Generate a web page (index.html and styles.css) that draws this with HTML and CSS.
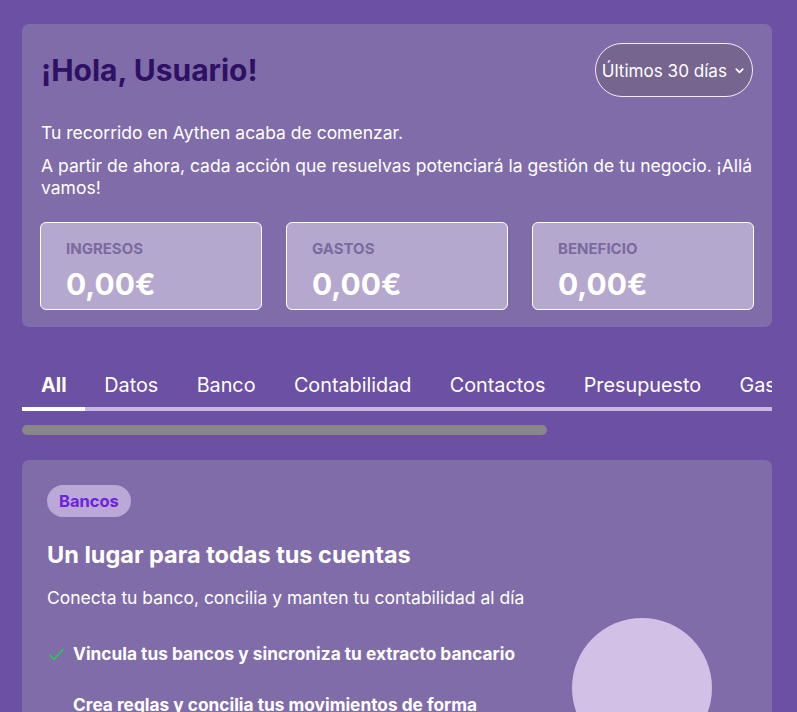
FILE: index.html
```html
<!DOCTYPE html>
<html lang="es">
<head>
<meta charset="utf-8">
<title>Aythen</title>
<link rel="stylesheet" href="styles.css">
</head>
<body>
<main class="page">
  <section class="card welcome">
    <div class="welcome-head">
      <h1 class="title">¡Hola, Usuario!</h1>
      <button class="range">Últimos 30 días
        <svg class="chev" width="11" height="11" viewBox="0 0 12 12"><path d="M2.5 4.5 6 8l3.5-3.5" fill="none" stroke="#fff" stroke-width="1.9" stroke-linecap="round" stroke-linejoin="round"/></svg>
      </button>
    </div>
    <p class="intro first">Tu recorrido en Aythen acaba de comenzar.</p>
    <p class="intro">A partir de ahora, cada acción que resuelvas potenciará la gestión de tu negocio. ¡Allá vamos!</p>
    <div class="stats">
      <div class="stat"><div class="stat-label">INGRESOS</div><div class="stat-value">0,00€</div></div>
      <div class="stat"><div class="stat-label">GASTOS</div><div class="stat-value">0,00€</div></div>
      <div class="stat"><div class="stat-label">BENEFICIO</div><div class="stat-value">0,00€</div></div>
    </div>
  </section>

  <nav class="tabs">
    <span class="tab active">All</span>
    <span class="tab">Datos</span>
    <span class="tab">Banco</span>
    <span class="tab">Contabilidad</span>
    <span class="tab">Contactos</span>
    <span class="tab">Presupuesto</span>
    <span class="tab">Gastos</span>
    <span class="tab">Facturas</span>
  </nav>
  <div class="scrollbar"><div class="thumb"></div></div>

  <section class="card feature">
    <div class="feature-text">
      <span class="badge">Bancos</span>
      <h2 class="feature-title">Un lugar para todas tus cuentas</h2>
      <p class="feature-sub">Conecta tu banco, concilia y manten tu contabilidad al día</p>
      <ul class="checks">
        <li class="check-item">
          <svg class="check" width="15" height="13" viewBox="0 0 15 13"><path d="M1 7l4 4.5L14 1.5" fill="none" stroke="#22d34f" stroke-width="1.4" stroke-linecap="round" stroke-linejoin="round"/></svg>
          <span>Vincula tus bancos y sincroniza tu extracto bancario</span>
        </li>
        <li class="check-item">
          <svg class="check" width="15" height="13" viewBox="0 0 15 13"><path d="M1 7l4 4.5L14 1.5" fill="none" stroke="#22d34f" stroke-width="1.4" stroke-linecap="round" stroke-linejoin="round"/></svg>
          <span>Crea reglas y concilia tus movimientos de forma automática</span>
        </li>
      </ul>
    </div>
    <div class="feature-art"><div class="circle"></div></div>
  </section>
</main>
</body>
</html>
```

FILE: styles.css
```css
* { box-sizing: border-box; }
html, body { margin: 0; padding: 0; }
body {
  background: #6c50a3;
  font-family: Inter, "Noto Sans", sans-serif;
  color: #fff;
  height: 712px;
  overflow: hidden;
}
.page {
  width: 750px;
  margin-left: 22px;
  padding-top: 24px;
}
.card {
  background: #806ca8;
  border-radius: 7px;
}
.welcome {
  padding: 19px 18px 17px 18px;
}
.welcome-head {
  display: flex;
  justify-content: space-between;
  align-items: center;
}
.title {
  margin: 0 0 0 1px;
  font-size: 30px;
  font-weight: 700;
  line-height: 36px;
  color: #2e1065;
}
.range {
  display: flex;
  align-items: center;
  gap: 7px;
  height: 54px;
  padding: 0 7px 0 6px;
  margin-right: 1px;
  border: 1px solid #f2eefa;
  border-radius: 27px;
  background: #76658f;
  color: #fff;
  font-family: Inter, sans-serif;
  font-size: 17.1px;
}
.chev { margin-top: 1px; }
.intro {
  margin: 0 0 11px 1px;
  font-size: 17.5px;
  line-height: 22px;
}
.intro.first { margin-top: 25px; }
.stats {
  display: grid;
  grid-template-columns: repeat(3, 1fr);
  gap: 24px;
  margin-top: 23px;
}
.stat {
  background: #b5a8ce;
  border: 1px solid #fff;
  border-radius: 6px;
  padding: 17px 25px 8px;
  height: 88px;
}
.stat-label {
  font-size: 15px;
  font-weight: 700;
  color: #7a6a9e;
  line-height: 18px;
}
.stat-value {
  margin-top: 8px;
  font-size: 30px;
  font-weight: 700;
  line-height: 36px;
}
.tabs {
  display: flex;
  overflow: hidden;
  margin-top: 36px;
  background: linear-gradient(#c8b7e3, #c8b7e3) left bottom / 100% 4px no-repeat;
}
.tab {
  flex-shrink: 0;
  white-space: nowrap;
  padding: 10px 19.2px 10px;
  font-size: 19.8px;
  line-height: 24px;
  border-bottom: 4px solid transparent;
}
.tab:first-child {
  padding-left: 19px;
  padding-right: 18.6px;
}
.tab.active {
  font-weight: 700;
  border-bottom-color: #fff;
}
.scrollbar {
  margin-top: 14px;
  height: 10px;
}
.thumb {
  width: 525px;
  height: 10px;
  border-radius: 5px;
  background: #888888;
}
.feature {
  margin-top: 25px;
  padding: 25px;
  display: grid;
  grid-template-columns: 1fr 210px;
  min-height: 320px;
}
.badge {
  display: inline-block;
  padding: 0 12px;
  height: 32px;
  line-height: 32px;
  border-radius: 16px;
  background: #baa8d6;
  color: #6d22df;
  font-size: 16.5px;
  font-weight: 700;
}
.feature-title {
  margin: 24px 0 0;
  font-size: 23.5px;
  font-weight: 700;
  line-height: 28px;
}
.feature-sub {
  margin: 18px 0 0;
  font-size: 17.5px;
  line-height: 22px;
}
.checks {
  list-style: none;
  margin: 34px 0 0;
  padding: 0;
}
.check-item {
  display: flex;
  align-items: center;
  gap: 9px;
  font-size: 17.3px;
  font-weight: 700;
  line-height: 22px;
  margin-bottom: 29px;
}
.check-item + .check-item .check { margin-top: 6px; }
.check { flex-shrink: 0; margin-left: 2px; }
.feature-art {
  display: flex;
  justify-content: center;
  padding-top: 133px;
}
.circle {
  width: 140px;
  height: 140px;
  border-radius: 50%;
  background: #d2c0e6;
}
```
